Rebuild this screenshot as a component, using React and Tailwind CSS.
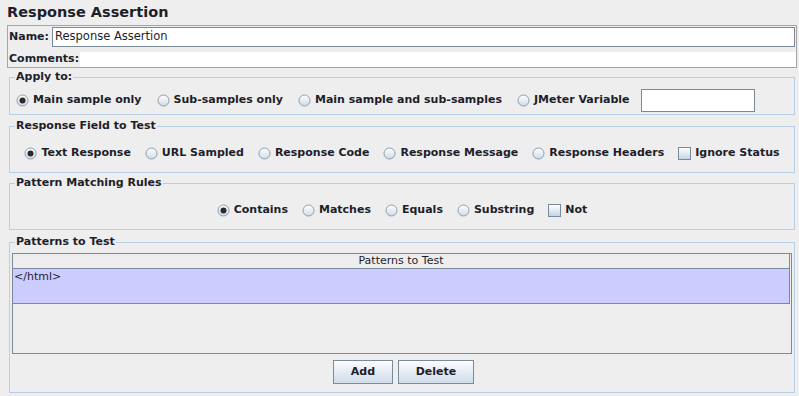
import React from "react";

const Radio = ({ checked }) => (
  <svg width="13" height="13" viewBox="0 0 13 13" className="shrink-0">
    <defs>
      <linearGradient id={checked ? "rg1" : "rg0"} x1="0" y1="0" x2="0" y2="1">
        <stop offset="0" stopColor="#ffffff" />
        <stop offset="1" stopColor="#cfdbe8" />
      </linearGradient>
    </defs>
    <circle cx="6.5" cy="6.5" r="5.5" fill={`url(#${checked ? "rg1" : "rg0"})`} stroke="#8c9cac" strokeWidth="1" />
    {checked && <circle cx="6.5" cy="6.5" r="3" fill="#2a2a2a" />}
  </svg>
);

const Check = () => (
  <span className="w-[13px] h-[13px] shrink-0 border border-[#7a8a99] bg-gradient-to-b from-white to-[#c4d4e4]" />
);

const Opt = ({ label, checked, box }) => (
  <span className="flex items-center gap-[4px] whitespace-nowrap">
    {box ? <Check /> : <Radio checked={checked} />}
    <span className="font-bold">{label}</span>
  </span>
);

const Legend = ({ children }) => (
  <legend className="ml-[5px] px-[1px] text-[11px] font-bold leading-[16px]">{children}</legend>
);

export default function App() {
  return (
    <div
      className="w-[799px] h-[396px] overflow-hidden bg-[#eeeeee] text-[#1e1e2a] text-[11px]"
      style={{ fontFamily: "'DejaVu Sans', sans-serif" }}
    >
      {/* Title */}
      <div className="h-[25px] pl-[7px] text-[14.5px] font-bold leading-[25px]">Response Assertion</div>

      {/* Name / Comments */}
      <div className="ml-[7px] w-[790px] border border-[#a5a5a5]">
        <div className="flex items-center mt-[1px] h-[20px]">
          <span className="pl-[1px] w-[44px] font-bold">Name:</span>
          <div className="flex-1 mr-[1px] h-[20px] bg-white border border-[#7a8a99] flex items-center pl-[2px] text-[11.5px]">
            Response Assertion
          </div>
        </div>
        <div className="flex items-center mt-[5px] h-[15px]">
          <span className="pl-[1px] w-[72px] font-bold">Comments:</span>
          <div className="flex-1 h-full bg-white" />
        </div>
      </div>

      {/* Apply to */}
      <fieldset className="ml-[9px] mt-[1px] w-[786px] border border-[#b8cfe5] pt-[4px] pb-[2px]">
        <Legend>Apply to:</Legend>
        <div className="flex items-center gap-[15px] h-[23px] pl-[6px]">
          <Opt label="Main sample only" checked />
          <Opt label="Sub-samples only" />
          <Opt label="Main sample and sub-samples" />
          <Opt label="JMeter Variable" />
          <div className="ml-[-4px] w-[114px] h-[23px] bg-white border border-[#7a8a99]" />
        </div>
      </fieldset>

      {/* Response Field to Test */}
      <fieldset className="ml-[9px] mt-[3px] w-[786px] h-[55px] border border-[#b8cfe5]">
        <Legend>Response Field to Test</Legend>
        <div className="flex items-center justify-center gap-[14px] h-[38px]">
          <Opt label="Text Response" checked />
          <Opt label="URL Sampled" />
          <Opt label="Response Code" />
          <Opt label="Response Message" />
          <Opt label="Response Headers" />
          <Opt label="Ignore Status" box />
        </div>
      </fieldset>

      {/* Pattern Matching Rules */}
      <fieldset className="ml-[9px] mt-[2px] w-[786px] h-[55px] border border-[#b8cfe5]">
        <Legend>Pattern Matching Rules</Legend>
        <div className="flex items-center justify-center gap-[14px] h-[38px] pt-[1px]">
          <Opt label="Contains" checked />
          <Opt label="Matches" />
          <Opt label="Equals" />
          <Opt label="Substring" />
          <Opt label="Not" box />
        </div>
      </fieldset>

      {/* Patterns to Test */}
      <fieldset className="ml-[9px] mt-[4px] w-[786px] h-[159px] border border-[#b8cfe5] pt-[3px]">
        <Legend>Patterns to Test</Legend>
        <div className="ml-[2px] w-[780px] h-[101px] border border-[#7a8a99] flex flex-col">
          <div className="h-[15px] mr-[1px] border-b border-r border-[#7a8a99] flex items-center justify-center text-[11px] leading-[14px]">
            Patterns to Test
          </div>
          <div className="h-[35px] mr-[1px] bg-[#ccccff] border-b border-r border-[#7a8a99] pl-[1px] pt-[1px] text-[11px] leading-[14px]">
            &lt;/html&gt;
          </div>
        </div>
        <div className="flex justify-center gap-[5px] mt-[6px] pl-[3px]">
          <button className="w-[60px] h-[24px] border border-[#7a8a99] bg-gradient-to-b from-[#fbfcfe] to-[#cfdcea] font-bold text-[11px]">
            Add
          </button>
          <button className="w-[76px] h-[24px] border border-[#7a8a99] bg-gradient-to-b from-[#fbfcfe] to-[#cfdcea] font-bold text-[11px]">
            Delete
          </button>
        </div>
      </fieldset>
    </div>
  );
}
